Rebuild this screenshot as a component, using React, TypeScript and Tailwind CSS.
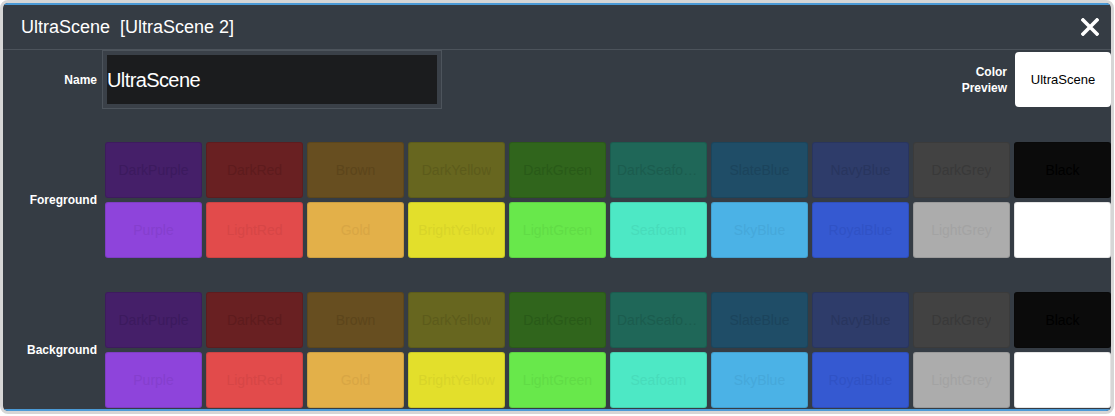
import React from "react";

type Swatch = {
  name: string;
  bg: string;
  fg: string;
};

// two rows of ten: dark shades on top, light shades below
const darkRow: Swatch[] = [
  { name: "DarkPurple", bg: "bg-[#451f69]", fg: "text-[#3c1a5e]" },
  { name: "DarkRed", bg: "bg-[#692022]", fg: "text-[#5d1b1d]" },
  { name: "Brown", bg: "bg-[#674e20]", fg: "text-[#5c451b]" },
  { name: "DarkYellow", bg: "bg-[#67661f]", fg: "text-[#5c5b1b]" },
  { name: "DarkGreen", bg: "bg-[#30651c]", fg: "text-[#295a18]" },
  { name: "DarkSeafoam", bg: "bg-[#1f6758]", fg: "text-[#1b5c4e]" },
  { name: "SlateBlue", bg: "bg-[#1f4d67]", fg: "text-[#1b445c]" },
  { name: "NavyBlue", bg: "bg-[#2e3c6a]", fg: "text-[#28355e]" },
  { name: "DarkGrey", bg: "bg-[#424242]", fg: "text-[#393939]" },
  { name: "Black", bg: "bg-[#0b0b0b]", fg: "text-black" },
];

const lightRow: Swatch[] = [
  { name: "Purple", bg: "bg-[#8e44db]", fg: "text-[#853fcd]" },
  { name: "LightRed", bg: "bg-[#e24b4b]", fg: "text-[#d64646]" },
  { name: "Gold", bg: "bg-[#e3b049]", fg: "text-[#d8a644]" },
  { name: "BrightYellow", bg: "bg-[#e3df2b]", fg: "text-[#d8d429]" },
  { name: "LightGreen", bg: "bg-[#68e84b]", fg: "text-[#61dc46]" },
  { name: "Seafoam", bg: "bg-[#4de8c5]", fg: "text-[#48dcbb]" },
  { name: "SkyBlue", bg: "bg-[#4bb2e6]", fg: "text-[#46a8da]" },
  { name: "RoyalBlue", bg: "bg-[#3559d1]", fg: "text-[#3052c5]" },
  { name: "LightGrey", bg: "bg-[#acacac]", fg: "text-[#a3a3a3]" },
  { name: "White", bg: "bg-white", fg: "text-white" },
];

const SwatchRow = ({ items }: { items: Swatch[] }) => (
  <div className="flex gap-[4px]">
    {items.map((s) => (
      <div
        key={s.name}
        className={`${s.bg} ${s.fg} w-[97px] h-[56px] shrink-0 rounded-[3px] border border-black/10 flex items-center justify-center px-[6px] text-[14px]`}
      >
        <span className="truncate">{s.name}</span>
      </div>
    ))}
  </div>
);

const ColorSection = ({ label }: { label: string }) => (
  <div className="flex items-center">
    <div className="w-[94px] text-right text-[12px] font-bold text-white">
      {label}
    </div>
    <div className="ml-[8px] flex flex-col gap-[4px]">
      <SwatchRow items={darkRow} />
      <SwatchRow items={lightRow} />
    </div>
  </div>
);

export default function App() {
  return (
    <div
      className="w-[1115px] h-[416px] bg-white"
      style={{ fontFamily: '"Liberation Sans", Arial, sans-serif' }}
    >
      <div className="h-[414px] w-[1114px] rounded-[8px] border-[3px] border-[#d6d6d6] overflow-hidden">
        <div className="h-full flex flex-col bg-[#353c44] border-t-2 border-b-2 border-t-[#4b9ad6] border-b-[#4b9ad6]">
          <div className="h-[45px] shrink-0 flex items-center justify-between pl-[18px] pr-[12px] border-b border-[#4c535b]">
            <span className="text-[18px] text-white whitespace-pre">
              UltraScene  [UltraScene 2]
            </span>
            <svg width="18" height="18" viewBox="0 0 18 18">
              <path
                d="M2 2 L16 16 M16 2 L2 16"
                stroke="white"
                strokeWidth="3.6"
                strokeLinecap="square"
              />
            </svg>
          </div>

          <div className="flex items-center h-[59px] shrink-0">
            <div className="w-[94px] text-right text-[12px] font-bold text-white">
              Name
            </div>
            <div className="ml-[5px] w-[340px] h-[59px] border border-[#4d545c] bg-[#3a4048] p-[4px]">
              <div className="h-full bg-[#1b1c1e] flex items-center text-[20px] tracking-[-0.6px] text-white">
                UltraScene
              </div>
            </div>
            <div className="flex-1 flex justify-end items-center gap-[8px]">
              <div className="text-right text-[12px] font-bold text-white leading-[16px]">
                Color
                <br />
                Preview
              </div>
              <div className="w-[96px] h-[55px] rounded-[4px] bg-white flex items-center justify-center text-[13px] text-black">
                UltraScene
              </div>
            </div>
          </div>

          <div className="mt-[33px] flex flex-col gap-[34px]">
            <ColorSection label="Foreground" />
            <ColorSection label="Background" />
          </div>
        </div>
      </div>
    </div>
  );
}
